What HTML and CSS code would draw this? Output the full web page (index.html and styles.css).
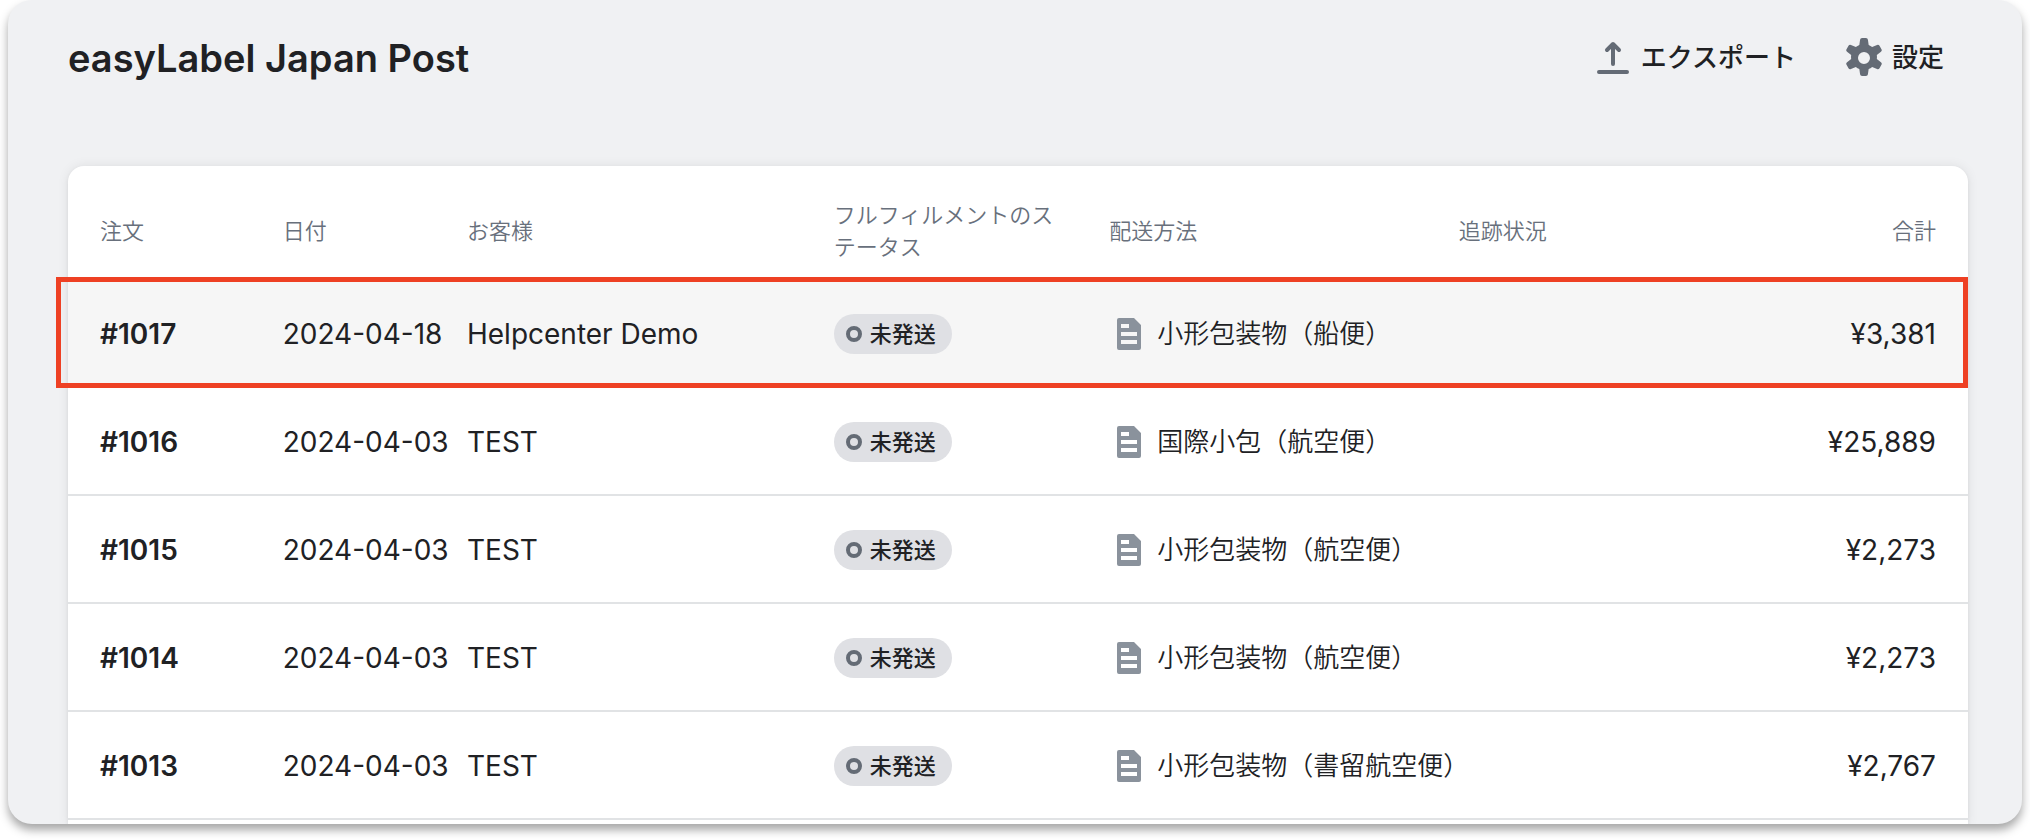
FILE: index.html
```html
<!DOCTYPE html>
<html lang="ja">
<head>
<meta charset="utf-8">
<meta name="viewport" content="width=device-width, initial-scale=1">
<title>easyLabel Japan Post</title>
<link rel="stylesheet" href="styles.css">
</head>
<body>
<svg class="sprite" aria-hidden="true">
  <symbol id="icon-export" viewBox="0 0 20 20">
    <path d="M10 3.500V13M7 6l3-3 3 3M3 17h14" fill="none" stroke="currentColor" stroke-width="2" stroke-linecap="round" stroke-linejoin="round"/>
  </symbol>
  <symbol id="icon-settings" viewBox="0 0 20 20">
    <path fill="currentColor" fill-rule="evenodd" d="M9.027 0a1 1 0 0 0-.99.859l-.37 2.598a6.993 6.993 0 0 0-1.742 1.01l-2.44-.98a1 1 0 0 0-1.24.423l-.972 1.682a1 1 0 0 0 .25 1.287l2.066 1.62a7.06 7.06 0 0 0 0 2.002l-2.066 1.62a1 1 0 0 0-.25 1.287l.971 1.682a1 1 0 0 0 1.24.423l2.44-.979a6.992 6.992 0 0 0 1.743 1.01l.37 2.597a1 1 0 0 0 .99.859h1.945a1 1 0 0 0 .99-.859l.37-2.598a6.996 6.996 0 0 0 1.742-1.01l2.44.98a1 1 0 0 0 1.24-.423l.972-1.682a1 1 0 0 0-.25-1.287l-2.066-1.62a7.1 7.1 0 0 0 0-2.002l2.066-1.62a1 1 0 0 0 .25-1.287l-.972-1.682a1 1 0 0 0-1.24-.423l-2.439.98a6.991 6.991 0 0 0-1.743-1.01l-.37-2.598a1 1 0 0 0-.99-.859h-1.944zm.973 13a3 3 0 1 0 0-6 3 3 0 0 0 0 6z"/>
  </symbol>
  <symbol id="icon-note" viewBox="0 0 20 20">
    <path fill="currentColor" fill-rule="evenodd" d="M5 2h7.500L16 5.500V17a1 1 0 0 1-1 1H5a1 1 0 0 1-1-1V3a1 1 0 0 1 1-1zM6 5v2h4V5zM6 9v2h8V9zM6 13v2h8v-2z"/>
  </symbol>
</svg>
<main class="frame">
  <header class="page-header">
    <h1 class="page-title">easyLabel Japan Post</h1>
    <div class="actions">
      <button class="action" type="button"><svg class="icon"><use href="#icon-export"/></svg>エクスポート</button>
      <button class="action" type="button"><svg class="icon"><use href="#icon-settings"/></svg>設定</button>
    </div>
  </header>
  <section class="card">
    <table class="orders">
      <colgroup>
        <col class="col-order"><col class="col-date"><col class="col-customer"><col class="col-status"><col class="col-shipping"><col class="col-tracking"><col class="col-total">
      </colgroup>
      <thead>
        <tr>
          <th scope="col">注文</th>
          <th scope="col">日付</th>
          <th scope="col">お客様</th>
          <th scope="col" class="status-head">フルフィルメントのステータス</th>
          <th scope="col">配送方法</th>
          <th scope="col">追跡状況</th>
          <th scope="col" class="total">合計</th>
        </tr>
      </thead>
      <tbody>
        <tr class="highlighted">
          <td class="order">#1017</td><td>2024-04-18</td><td>Helpcenter Demo</td>
          <td><span class="badge"><span class="ring"></span>未発送</span></td>
          <td><span class="shipping"><svg class="icon"><use href="#icon-note"/></svg>小形包装物（船便）</span></td>
          <td></td><td class="total">¥3,381</td>
        </tr>
        <tr>
          <td class="order">#1016</td><td>2024-04-03</td><td>TEST</td>
          <td><span class="badge"><span class="ring"></span>未発送</span></td>
          <td><span class="shipping"><svg class="icon"><use href="#icon-note"/></svg>国際小包（航空便）</span></td>
          <td></td><td class="total">¥25,889</td>
        </tr>
        <tr>
          <td class="order">#1015</td><td>2024-04-03</td><td>TEST</td>
          <td><span class="badge"><span class="ring"></span>未発送</span></td>
          <td><span class="shipping"><svg class="icon"><use href="#icon-note"/></svg>小形包装物（航空便）</span></td>
          <td></td><td class="total">¥2,273</td>
        </tr>
        <tr>
          <td class="order">#1014</td><td>2024-04-03</td><td>TEST</td>
          <td><span class="badge"><span class="ring"></span>未発送</span></td>
          <td><span class="shipping"><svg class="icon"><use href="#icon-note"/></svg>小形包装物（航空便）</span></td>
          <td></td><td class="total">¥2,273</td>
        </tr>
        <tr>
          <td class="order">#1013</td><td>2024-04-03</td><td>TEST</td>
          <td><span class="badge"><span class="ring"></span>未発送</span></td>
          <td><span class="shipping"><svg class="icon"><use href="#icon-note"/></svg>小形包装物（書留航空便）</span></td>
          <td></td><td class="total">¥2,767</td>
        </tr>
      </tbody>
    </table>
  </section>
</main>
</body>
</html>
```

FILE: styles.css
```css
* {
  box-sizing: border-box;
}

body {
  margin: 0;
  padding: 0 8px 16px;
  background: #fff;
  color: #202124;
  font-family: Inter, "Noto Sans CJK JP", sans-serif;
  font-size: 28px;
}

.sprite {
  position: absolute;
  width: 0;
  height: 0;
}

.frame {
  display: flex;
  flex-direction: column;
  min-height: calc(100vh - 16px);
  padding: 0 54px 0 60px;
  border-radius: 24px;
  background: #f0f1f3;
  box-shadow: 0 6px 10px rgba(0, 0, 0, 0.35);
}

.page-header {
  display: flex;
  align-items: center;
  justify-content: space-between;
  min-height: 116px;
  margin-bottom: 50px;
}

.page-title {
  margin: 0;
  font-size: 38px;
  font-weight: 600;
  line-height: 48px;
}

.actions {
  display: flex;
}

.action {
  display: flex;
  align-items: center;
  gap: 8px;
  padding: 0 24px;
  border: 0;
  background: none;
  color: inherit;
  font-family: inherit;
  font-size: 26px;
  font-weight: 500;
  line-height: 40px;
}

.icon {
  flex: none;
  width: 40px;
  height: 40px;
  color: #646b75;
}

.card {
  flex: 1;
  border-radius: 16px 16px 0 0;
  background: #fff;
  box-shadow: 0 0 12px rgba(23, 24, 24, 0.08), 0 2px 4px rgba(0, 0, 0, 0.06);
  clip-path: inset(-16px -16px 0 -16px);
}

.orders {
  width: 100%;
  border-collapse: separate;
  border-spacing: 0;
  table-layout: fixed;
}

.col-order { width: 11.3%; }
.col-date { width: 9.7%; }
.col-customer { width: 19.3%; }
.col-status { width: 14.5%; }
.col-shipping { width: 18.4%; }
.col-tracking { width: 10%; }
.col-total { width: 16.8%; }

.orders th {
  height: 114px;
  padding: 16px 0 0;
  color: #68707c;
  font-size: 22px;
  font-weight: 350;
  line-height: 32px;
  text-align: left;
}

.orders .status-head {
  padding-right: 48px;
}

.orders td {
  height: 108px;
  padding: 0;
  box-shadow: inset 0 -2px #e1e3e5;
  line-height: 40px;
  white-space: nowrap;
}

.orders th:first-child,
.orders td:first-child {
  padding-left: 32px;
}

.orders .total {
  padding-right: 32px;
  text-align: right;
}

.orders .order {
  font-weight: 600;
}

.highlighted {
  position: relative;
  background: #f6f6f6;
}

.highlighted::after {
  content: "";
  position: absolute;
  inset: -3px 0 0 -12px;
  border: 5px solid #ee4023;
}

.badge {
  display: flex;
  align-items: center;
  gap: 8px;
  width: max-content;
  height: 40px;
  padding: 0 16px 0 12px;
  border-radius: 20px;
  background: #dfe0e4;
  font-size: 22px;
  font-weight: 500;
}

.ring {
  width: 16px;
  height: 16px;
  border: 4px solid #646b75;
  border-radius: 50%;
}

.shipping {
  display: flex;
  align-items: center;
  gap: 8px;
  font-size: 26px;
  font-weight: 350;
}

.shipping .icon {
  color: #8a929c;
}
```
